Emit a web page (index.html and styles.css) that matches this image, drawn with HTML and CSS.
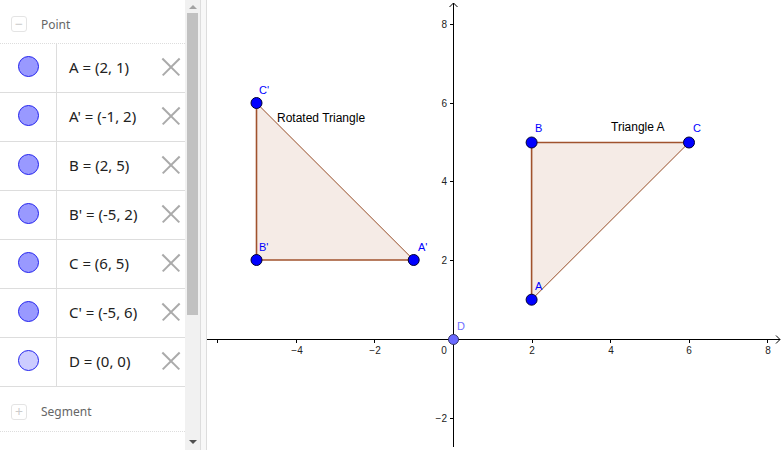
FILE: index.html
```html
<!DOCTYPE html>
<html lang="en">
<head>
	<meta charset="UTF-8">
	<title>Rotated Triangle</title>
	<link rel="stylesheet" href="styles.css">
</head>
<body>
	<div class="app">
		<div class="algebra">
			<div class="list">
				<div class="group">
					<span class="toggle">&minus;</span>
					<span class="group-name">Point</span>
				</div>
				<div class="item">
					<div class="marble"><span class="dot"></span></div>
					<div class="formula">A = (2, 1)</div>
					<span class="close"></span>
				</div>
				<div class="item">
					<div class="marble"><span class="dot"></span></div>
					<div class="formula">A' = (-1, 2)</div>
					<span class="close"></span>
				</div>
				<div class="item">
					<div class="marble"><span class="dot"></span></div>
					<div class="formula">B = (2, 5)</div>
					<span class="close"></span>
				</div>
				<div class="item">
					<div class="marble"><span class="dot"></span></div>
					<div class="formula">B' = (-5, 2)</div>
					<span class="close"></span>
				</div>
				<div class="item">
					<div class="marble"><span class="dot"></span></div>
					<div class="formula">C = (6, 5)</div>
					<span class="close"></span>
				</div>
				<div class="item">
					<div class="marble"><span class="dot"></span></div>
					<div class="formula">C' = (-5, 6)</div>
					<span class="close"></span>
				</div>
				<div class="item">
					<div class="marble"><span class="dot light"></span></div>
					<div class="formula">D = (0, 0)</div>
					<span class="close"></span>
				</div>
				<div class="group">
					<span class="toggle">+</span>
					<span class="group-name">Segment</span>
				</div>
			</div>
			<div class="scrollbar">
				<span class="arrow up"></span>
				<div class="thumb"></div>
				<span class="arrow down"></span>
			</div>
		</div>
		<div class="splitter"></div>
		<div class="graphics">
			<svg width="575" height="450" viewBox="207 0 575 450">
				<!-- triangles -->
				<polygon points="531.6,299.7 531.6,142.5 689,142.5" fill="#f5ebe6"/>
				<line x1="531.6" y1="299.7" x2="531.6" y2="142.5" stroke="#a0522d" stroke-width="1.6"/>
				<line x1="531.6" y1="142.5" x2="689" y2="142.5" stroke="#a0522d" stroke-width="1.6"/>
				<line x1="531.6" y1="299.7" x2="689" y2="142.5" stroke="#8b3a10" stroke-width="0.9"/>

				<polygon points="413.7,260 256.5,260 256.5,103" fill="#f5ebe6"/>
				<line x1="413.7" y1="260" x2="256.5" y2="260" stroke="#a0522d" stroke-width="1.6"/>
				<line x1="256.5" y1="260" x2="256.5" y2="103" stroke="#a0522d" stroke-width="1.6"/>
				<line x1="413.7" y1="260" x2="256.5" y2="103" stroke="#8b3a10" stroke-width="0.9"/>

				<!-- axes -->
				<g stroke="#000" stroke-width="1" fill="none">
					<line x1="207" y1="339.5" x2="780" y2="339.5"/>
					<polyline points="776,335.5 780,339.5 776,343.5"/>
					<line x1="453.5" y1="447" x2="453.5" y2="3"/>
					<polyline points="449.5,7 453.5,3 457.5,7"/>
					<line x1="217.5" y1="339.5" x2="217.5" y2="343"/>
					<line x1="296.5" y1="339.5" x2="296.5" y2="343"/>
					<line x1="374.5" y1="339.5" x2="374.5" y2="343"/>
					<line x1="532.5" y1="339.5" x2="532.5" y2="343"/>
					<line x1="610.5" y1="339.5" x2="610.5" y2="343"/>
					<line x1="689.5" y1="339.5" x2="689.5" y2="343"/>
					<line x1="767.5" y1="339.5" x2="767.5" y2="343"/>
					<line x1="450" y1="24.5" x2="453.5" y2="24.5"/>
					<line x1="450" y1="103.5" x2="453.5" y2="103.5"/>
					<line x1="450" y1="181.5" x2="453.5" y2="181.5"/>
					<line x1="450" y1="260.5" x2="453.5" y2="260.5"/>
					<line x1="450" y1="418.5" x2="453.5" y2="418.5"/>
				</g>
				<g class="tick-label" text-anchor="middle">
					<text x="297" y="354">&minus;4</text>
					<text x="375" y="354">&minus;2</text>
					<text x="444" y="354">0</text>
					<text x="532" y="354">2</text>
					<text x="611" y="354">4</text>
					<text x="689" y="354">6</text>
					<text x="768" y="354">8</text>
				</g>
				<g class="tick-label" text-anchor="end">
					<text x="447" y="28">8</text>
					<text x="447" y="107">6</text>
					<text x="447" y="185">4</text>
					<text x="447" y="264">2</text>
					<text x="447" y="422">&minus;2</text>
				</g>

				<!-- captions -->
				<text class="caption" x="277" y="122">Rotated Triangle</text>
				<text class="caption" x="611" y="131">Triangle A</text>

				<!-- points -->
				<g fill="#0000ff" stroke="#000033" stroke-width="1">
					<circle cx="531.6" cy="299.7" r="5.5"/>
					<circle cx="531.6" cy="142.5" r="5.5"/>
					<circle cx="689" cy="142.5" r="5.5"/>
					<circle cx="413.7" cy="260" r="5.5"/>
					<circle cx="256.5" cy="260" r="5.5"/>
					<circle cx="256.5" cy="103" r="5.5"/>
				</g>
				<circle cx="453.5" cy="339.5" r="5" fill="#6a6aff" stroke="#333366" stroke-width="1"/>

				<g class="point-label">
					<text x="535" y="290">A</text>
					<text x="535" y="132">B</text>
					<text x="693" y="132">C</text>
					<text x="418" y="251">A'</text>
					<text x="259" y="251">B'</text>
					<text x="259" y="94">C'</text>
				</g>
				<text class="point-label faint" x="457" y="330">D</text>
			</svg>
		</div>
	</div>
</body>
</html>
```

FILE: styles.css
```css
body {
	margin: 0;
	background-color: #fff;
	font-family: "Noto Sans", "DejaVu Sans", sans-serif;
}

.app {
	display: flex;
	width: 782px;
	height: 450px;
	overflow: hidden;
}

.algebra {
	display: flex;
	width: 200px;
	height: 450px;
}

.list {
	width: 185px;
	height: 450px;
	overflow: hidden;
}

.group {
	display: flex;
	align-items: center;
	height: 44px;
	padding-top: 5px;
	border-bottom: 1px dotted #ddd;
	box-sizing: border-box;
}

.group:last-child {
	height: 45px;
}

.toggle {
	width: 14px;
	height: 14px;
	margin-left: 11px;
	margin-right: 14px;
	border: 1px solid #e4e4e4;
	border-radius: 3px;
	color: #ccc;
	font-size: 14px;
	line-height: 13px;
	text-align: center;
}

.group-name {
	font-size: 12px;
	color: #666;
}

.item {
	display: flex;
	align-items: center;
	height: 49px;
	border-bottom: 1px solid #ddd;
	box-sizing: border-box;
}

.marble {
	display: flex;
	align-items: center;
	justify-content: center;
	width: 57px;
	height: 100%;
	padding-bottom: 3px;
	box-sizing: border-box;
	border-right: 1px solid #ddd;
}

.dot {
	width: 19px;
	height: 19px;
	border-radius: 50%;
	background-color: #9999ff;
	border: 1px solid #2222ee;
}

.dot.light {
	background-color: #ccccff;
}

.formula {
	flex: 1;
	padding-left: 12px;
	padding-bottom: 3px;
	font-size: 15px;
	color: #222;
}

.close {
	position: relative;
	width: 18px;
	height: 18px;
	margin-right: 5px;
	margin-bottom: 3px;
}

.close::before,
.close::after {
	content: "";
	position: absolute;
	left: -3px;
	top: 8px;
	width: 24px;
	height: 1.5px;
	background-color: #aaa;
	transform: rotate(45deg);
}

.close::after {
	transform: rotate(-45deg);
}

.scrollbar {
	display: flex;
	flex-direction: column;
	align-items: center;
	width: 15px;
	background-color: #f1f1f1;
}

.thumb {
	width: 11px;
	height: 302px;
	background-color: #c1c1c1;
}

.arrow {
	width: 0;
	height: 0;
	border-left: 4px solid transparent;
	border-right: 4px solid transparent;
}

.arrow.up {
	margin: 5px 0 4px;
	border-bottom: 4px solid #a3a3a3;
}

.arrow.down {
	margin-top: auto;
	margin-bottom: 6px;
	border-top: 4px solid #505050;
}

.splitter {
	width: 5px;
	border-left: 1px solid #ddd;
	border-right: 1px solid #ddd;
	background-color: #f8f8f8;
}

.graphics {
	flex: 1;
}

.graphics svg {
	display: block;
}

.tick-label {
	font-family: "Liberation Sans", Arial, sans-serif;
	font-size: 10px;
	fill: #222;
}

.caption {
	font-family: "Liberation Sans", Arial, sans-serif;
	font-size: 12px;
	fill: #000;
}

.point-label {
	font-family: "Liberation Sans", Arial, sans-serif;
	font-size: 11px;
	fill: #0000ff;
}

.point-label.faint {
	fill: #7070ff;
}
```
